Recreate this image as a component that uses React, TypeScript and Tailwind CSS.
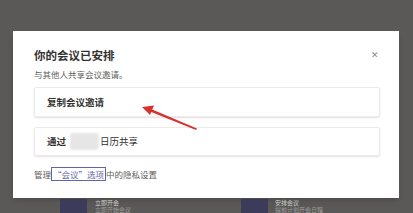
export default function App(): React.ReactElement {
  return (
    <div
      className="relative h-[213px] w-[413px] overflow-hidden bg-[#5a5957] pt-[31px] pl-[13px]"
      style={{ fontFamily: '"Noto Sans CJK SC", "Noto Sans", sans-serif' }}
    >
      <div className="h-[167px] w-[386px] bg-white pt-[17px] pl-[21px] pr-[19px] shadow-md">
        <div className="flex items-center justify-between">
          <h2 className="text-[11.5px] font-semibold leading-[14px] text-[#323130]">你的会议已安排</h2>
          <span className="mr-[1px] text-[9px] leading-[14px] text-[#8a8886]">✕</span>
        </div>
        <p className="mt-[6px] text-[8.5px] leading-[12px] text-[#605e5c]">与其他人共享会议邀请。</p>
        <div className="mt-[7px] flex h-[30px] items-center rounded-[2px] border border-[#edebe9] pl-[12px] shadow-[0_1px_2px_rgba(0,0,0,0.12)]">
          <span className="text-[9.5px] font-semibold text-[#323130]">复制会议邀请</span>
        </div>
        <div className="mt-[10px] flex h-[29px] items-center rounded-[2px] border border-[#edebe9] pl-[12px] shadow-[0_1px_2px_rgba(0,0,0,0.12)]">
          <span className="text-[9.5px] font-semibold text-[#323130]">通过</span>
          <span className="ml-[4px] h-[17px] w-[29px] rounded-[3px] bg-[#e6e6e6] blur-[1px]" />
          <span className="ml-[1px] text-[9.5px] text-[#323130]">日历共享</span>
        </div>
        <p className="mt-[11px] flex items-center text-[8.5px] leading-[12px] text-[#605e5c]">
          管理
          <span className="border border-[#6264a7] px-[1px] text-[#6264a7]">“会议”选项</span>
          中的隐私设置
        </p>
      </div>
      <div className="grid grid-cols-[181px_120px] pt-px pl-[47px]">
        <div className="flex items-start gap-[8px]">
          <div className="h-[16px] w-[27px] shrink-0 bg-[#3c3c5a]" />
          <div className="text-[6px] leading-[7px] text-[#cfcfcf]">
            <div>立即开会</div>
            <div className="text-[#9d9d9d]">立即开始会议</div>
          </div>
        </div>
        <div className="flex items-start gap-[7px]">
          <div className="h-[16px] w-[27px] shrink-0 bg-[#3c3c5a]" />
          <div className="text-[6px] leading-[7px] text-[#cfcfcf]">
            <div>安排会议</div>
            <div className="text-[#9d9d9d]">提前计划开会日程</div>
          </div>
        </div>
      </div>
      <svg
        className="absolute left-0 top-0"
        width={413}
        height={213}
        viewBox="0 0 413 213"
        aria-hidden
      >
        <polygon points="196,130 150,111.4 151,109 197,128.4" fill="#d6332e" />
        <polygon points="142,107 154,105.5 150,115" fill="#d6332e" />
      </svg>
    </div>
  );
}
